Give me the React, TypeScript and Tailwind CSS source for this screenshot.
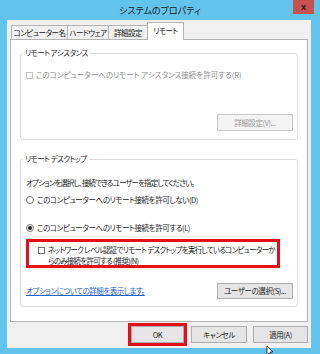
const jp = "font-['Noto_Sans_CJK_JP','Noto_Sans',sans-serif] [font-feature-settings:'palt']"

function CheckBox({ disabled }: { disabled?: boolean }) {
  return (
    <span
      className={`block h-[7px] w-[7px] shrink-0 border bg-white ${disabled ? 'border-[#c4c4c4]' : 'border-[#707070]'}`}
    />
  )
}

function Radio({ checked }: { checked?: boolean }) {
  return (
    <span className="flex h-[8px] w-[8px] shrink-0 items-center justify-center rounded-full border border-[#707070] bg-white">
      {checked && <span className="h-[4px] w-[4px] rounded-full bg-[#222]" />}
    </span>
  )
}

function Btn({ label, disabled, className = '' }: { label: string; disabled?: boolean; className?: string }) {
  return (
    <div
      className={`flex items-center justify-center whitespace-nowrap border text-[7.5px] leading-none tracking-[-0.4px] ${
        disabled ? 'border-[#c8c8c8] bg-[#f4f4f4] text-[#9a9a9a]' : 'border-[#adadad] bg-[#e5e5e5] text-[#1e1e1e]'
      } ${className}`}
    >
      {label}
    </div>
  )
}

function Group({ title, className = '', children }: { title: string; className?: string; children: React.ReactNode }) {
  return (
    <div className={`relative flex flex-col rounded-[3px] border border-[#dcdcdc] ${className}`}>
      <span className="absolute -top-[6px] left-[2px] whitespace-nowrap bg-white px-[2px] leading-[10px] text-[#2a2a2a]">
        {title}
      </span>
      {children}
    </div>
  )
}

export default function App() {
  return (
    <div className={`relative flex h-[354px] w-[320px] flex-col overflow-hidden bg-[#62c4ec] ${jp}`}>
      {/* title bar */}
      <div className="relative flex h-[20px] shrink-0 items-center justify-center">
        <span className="text-[9px] leading-none text-[#1a1a1a]">システムのプロパティ</span>
        <div className="absolute right-[6px] top-0 flex h-[14px] w-[21px] items-center justify-center bg-[#c75050] font-['Liberation_Sans',sans-serif] text-[9px] font-bold leading-none text-[#1c1c1c]">
          x
        </div>
      </div>

      {/* client */}
      <div className="mb-[6px] ml-[7px] mr-[9px] flex flex-1 flex-col bg-[#f0f0f0] px-[3px] pt-[3px]">
        {/* tabs */}
        <div className="flex h-[16px] items-end whitespace-nowrap pl-[1px] text-[7.5px] leading-none tracking-[-0.5px] text-[#1a1a1a]">
          <div className="flex h-[14px] w-[57px] items-center justify-center border border-b-0 border-[#b4b4b4] bg-[#f0f0f0]">
            コンピューター名
          </div>
          <div className="-ml-px flex h-[14px] w-[42px] items-center justify-center border border-b-0 border-[#b4b4b4] bg-[#f0f0f0]">
            ハードウェア
          </div>
          <div className="-ml-px flex h-[14px] w-[40px] items-center justify-center border border-b-0 border-[#b4b4b4] bg-[#f0f0f0]">
            詳細設定
          </div>
          <div className="relative z-10 -mb-px -ml-px flex h-[18px] w-[37px] items-center justify-center border border-b-0 border-[#b4b4b4] bg-white pb-[2px]">
            リモート
          </div>
        </div>

        {/* tab panel */}
        <div className="flex h-[283px] flex-col border border-[#b4b4b4] bg-white px-[9px] pt-[13px] text-[7.5px] leading-[10px] tracking-[-0.5px] text-[#1a1a1a]">
          <Group title="リモート アシスタンス" className="h-[87px] pl-[5px] pr-[4px] pt-[16px]">
            <div className="flex h-[10px] items-center gap-[3px] text-[#8c8c8c]">
              <CheckBox disabled />
              <span className="whitespace-nowrap tracking-[0px]">このコンピューターへのリモート アシスタンス接続を許可する(R)</span>
            </div>
            <Btn label="詳細設定(V)..." disabled className="mt-[34px] h-[17px] w-[76px] self-end" />
          </Group>

          <Group title="リモート デスクトップ" className="mt-[19px] h-[148px] pl-[5px] pr-[4px] pt-[18px]">
            <p className="h-[10px] whitespace-nowrap tracking-[-0.9px]">オプションを選択し、接続できるユーザーを指定してください。</p>
            <div className="mt-[7px] flex h-[10px] items-center gap-[3px]">
              <Radio />
              <span className="whitespace-nowrap tracking-[-0.4px]">このコンピューターへのリモート接続を許可しない(D)</span>
            </div>
            <div className="mt-[18px] flex h-[10px] items-center gap-[3px]">
              <Radio checked />
              <span className="whitespace-nowrap tracking-[-0.4px]">このコンピューターへのリモート接続を許可する(L)</span>
            </div>
            <div className="mt-[6px] flex h-[29px] w-[254px] items-start gap-[3px] border-[3px] border-[#e3101c] pl-[9px] pt-[2px]">
              <div className="mt-[3px]">
                <CheckBox />
              </div>
              <p className="whitespace-nowrap leading-[11px] tracking-[-0.75px]">
                ネットワーク レベル認証でリモート デスクトップを実行しているコンピューターか
                <br />
                らのみ接続を許可する (推奨)(N)
              </p>
            </div>
            <div className="mt-[15px] flex h-[16px] items-center justify-between">
              <span className="whitespace-nowrap text-[#1a62c4] underline">オプションについての詳細を表示します。</span>
              <Btn label="ユーザーの選択(S)..." className="h-[16px] w-[76px]" />
            </div>
          </Group>
        </div>

        {/* dialog buttons */}
        <div className="mt-[4px] flex justify-end">
          <Btn label="OK" className="mr-[7px] h-[17px] w-[53px] ring-[3px] ring-[#e3101c]" />
          <Btn label="キャンセル" className="mr-[6px] h-[17px] w-[56px]" />
          <Btn label="適用(A)" className="h-[17px] w-[55px]" />
        </div>
      </div>

      {/* mouse pointer */}
      <svg className="absolute left-[266px] top-[346px]" width="8" height="10" viewBox="0 0 8 10">
        <path d="M1 0 L1 9 L3 7 L5 10 L6 9 L4 6 L7 6 Z" fill="#fff" stroke="#111" strokeWidth="0.8" />
      </svg>
    </div>
  )
}
